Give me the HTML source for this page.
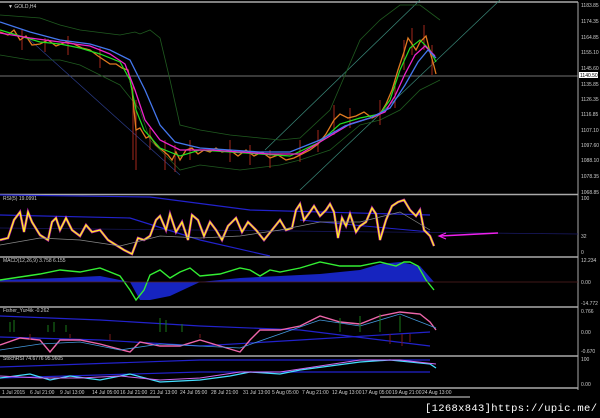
<!DOCTYPE html><html><head><style>
body{margin:0;background:#000;width:600px;height:418px;overflow:hidden;font-family:"Liberation Sans",sans-serif}
svg{position:absolute;left:0;top:0}
.t{font-size:5px;fill:#ccc}
</style></head><body>
<svg width="600" height="418" viewBox="0 0 600 418">
<rect width="600" height="418" fill="#000"/>
<g stroke="#aaa" stroke-width="1.5">
<line x1="0" y1="2" x2="578" y2="2"/>
<line x1="0" y1="194.5" x2="578" y2="194.5"/>
<line x1="0" y1="257" x2="578" y2="257"/>
<line x1="0" y1="307" x2="578" y2="307"/>
<line x1="0" y1="356" x2="578" y2="356"/>
<line x1="0" y1="388" x2="578" y2="388"/>
</g>
<line x1="578" y1="2" x2="578" y2="390" stroke="#aaa"/>
<line x1="0" y1="397" x2="160" y2="397" stroke="#ddd"/>
<line x1="380" y1="397" x2="470" y2="397" stroke="#ddd"/>
<line x1="0" y1="76" x2="578" y2="76" stroke="#999" stroke-width=".7"/>
<g stroke="#3a8a7a" stroke-width=".7" fill="none">
<line x1="265" y1="150" x2="420" y2="0"/>
<line x1="300" y1="190" x2="500" y2="0"/>
<line x1="30" y1="40" x2="180" y2="175" stroke="#2b3c8a"/>
</g>
<g fill="none" stroke="#1f5a1f" stroke-width=".8">
<path d="M0,15 L40,18 60,25 80,30 120,35 135,32 140,34 150,30 160,38 170,80 180,125 200,130 230,135 260,138 280,140 300,138 330,110 360,40 380,20 400,5 420,5 440,20"/>
<path d="M0,55 L30,60 60,60 80,65 120,85 140,110 150,140 170,160 180,170 200,165 240,170 280,165 300,160 330,150 360,125 380,120 400,110 420,90 440,80"/>
</g>
<g stroke="#cc3322" stroke-width=".8">
<path d="M22,30V50 M45,38V52 M68,36V55 M100,48V68 M133,85V160 M136,100V170 M150,128V150 M165,140V170 M175,145V172 M190,140V160 M230,140V162 M250,145V165 M270,150V168 M300,140V162 M318,130V152 M334,105V135 M350,108V128 M380,100V125 M395,80V108 M404,40V70 M412,28V55 M424,25V50 M432,45V75"/>
</g>
<path d="M0,32 L8,35 14,30 20,40 26,36 32,45 40,44 48,40 56,46 66,42 74,44 82,48 90,50 98,56 104,60 110,64 116,64 122,68 128,70 132,90 134,110 136,130 140,128 146,138 150,136 156,145 162,150 168,155 172,160 176,152 180,160 186,150 192,148 198,154 204,150 210,152 216,148 222,152 230,150 238,156 246,150 254,156 262,152 270,158 278,155 286,160 294,158 302,154 310,150 318,144 326,134 334,120 340,114 348,118 356,116 364,112 372,118 380,114 386,104 392,90 398,70 404,52 408,38 412,44 416,50 420,42 426,36 430,52 434,66 436,74" fill="none" stroke="#e07a20" stroke-width="1.3"/>
<path d="M0,30 L20,36 40,42 60,44 80,48 100,54 120,62 130,80 136,110 144,130 160,148 180,156 200,150 230,152 260,154 290,156 320,142 340,124 360,118 380,114 390,100 400,70 410,48 420,40 430,50 436,62" fill="none" stroke="#22dd22" stroke-width="1.2"/>
<path d="M0,33 L30,38 60,42 90,46 110,54 125,64 135,90 145,120 160,140 180,150 210,150 240,152 270,154 300,154 330,136 350,124 370,118 385,112 395,96 405,74 415,55 425,46 435,56" fill="none" stroke="#ee22cc" stroke-width="1.3"/>
<path d="M0,22 L30,32 60,40 90,44 110,50 130,60 145,90 160,125 175,142 200,148 230,150 260,152 290,152 320,140 345,126 370,118 390,108 405,85 418,62 428,50 436,58" fill="none" stroke="#4477ee" stroke-width="1.3"/>
<text x="8" y="8" class="t" fill="#ddd">▼ GOLD,H4</text>
<g class="t">
<text x="581" y="7">1183.85</text><text x="581" y="23">1174.35</text><text x="581" y="39">1164.85</text>
<text x="581" y="54">1155.10</text><text x="581" y="70">1145.60</text><text x="581" y="86">1135.85</text>
<text x="581" y="101">1126.35</text><text x="581" y="116">1116.85</text><text x="581" y="132">1107.10</text>
<text x="581" y="147">1097.60</text><text x="581" y="162">1088.10</text><text x="581" y="178">1078.35</text>
<text x="581" y="194">1068.85</text>
</g>
<rect x="579" y="72" width="19" height="6" fill="#fff"/><text x="580" y="77" style="font-size:5px" fill="#000">1140.50</text>
<g fill="none">
<path d="M0,195 L150,197 250,210 430,215" stroke="#2222cc" stroke-width="1.2"/>
<path d="M0,215 L130,218 200,240 270,256" stroke="#2222cc" stroke-width="1.2"/>
<path d="M0,228 L578,234" stroke="#1a1a66" stroke-width=".7"/>
<path d="M300,220 L430,232" stroke="#2222cc" stroke-width="1"/>
<path d="M0,240 L8,238 14,220 20,212 24,232 28,212 32,222 40,235 48,240 52,222 56,218 60,230 66,218 72,230 80,236 86,225 92,232 100,230 108,240 116,245 124,250 132,254 138,238 144,240 150,236 156,220 160,216 166,230 170,214 176,232 182,222 188,240 192,215 198,220 204,236 210,222 216,230 222,240 228,226 236,218 242,232 248,222 256,230 264,240 272,230 280,220 286,230 292,228 296,210 300,204 304,220 310,212 314,206 320,216 326,210 330,204 334,212 338,238 342,218 346,226 350,214 356,232 360,226 366,222 372,208 376,214 380,240 386,220 392,206 398,202 404,200 410,210 416,216 420,210 424,230 430,236 434,246" stroke="#ee22ee" stroke-width="2.6" opacity=".7"/>
<path d="M0,240 L8,238 14,220 20,212 24,232 28,212 32,222 40,235 48,240 52,222 56,218 60,230 66,218 72,230 80,236 86,225 92,232 100,230 108,240 116,245 124,250 132,254 138,238 144,240 150,236 156,220 160,216 166,230 170,214 176,232 182,222 188,240 192,215 198,220 204,236 210,222 216,230 222,240 228,226 236,218 242,232 248,222 256,230 264,240 272,230 280,220 286,230 292,228 296,210 300,204 304,220 310,212 314,206 320,216 326,210 330,204 334,212 338,238 342,218 346,226 350,214 356,232 360,226 366,222 372,208 376,214 380,240 386,220 392,206 398,202 404,200 410,210 416,216 420,210 424,230 430,236 434,246" stroke="#ffee22" stroke-width="1.4"/>
<path d="M0,245 L40,238 80,240 120,246 160,236 200,238 240,236 280,230 320,222 360,222 400,212 430,230" stroke="#888" stroke-width=".7"/>
<path d="M498,233 L440,236" stroke="#ee22ee" stroke-width="1.5"/>
<path d="M446,233 L439,236 446,239" stroke="#ee22ee" stroke-width="1.2"/>
</g>
<text x="3" y="200" class="t">RSI(5) 19.0991</text>
<g class="t"><text x="581" y="200">100</text><text x="581" y="238">32</text><text x="581" y="254">0</text></g>
<path d="M0,280 L60,278 100,276 130,282 140,300 150,300 170,296 200,282 240,278 280,276 320,274 360,270 380,264 400,262 420,266 434,282 L0,282 Z" fill="#1a2ae0" opacity=".85"/>
<path d="M0,280 L40,274 60,270 80,272 100,268 120,276 130,290 136,300 144,290 150,275 160,270 170,278 180,272 190,268 200,276 220,274 240,268 250,270 260,276 270,270 280,272 300,268 320,262 340,266 360,266 380,262 396,266 404,262 410,262 418,266 426,280 434,290" fill="none" stroke="#33ee33" stroke-width="1.4"/>
<line x1="0" y1="282" x2="578" y2="282" stroke="#552222" stroke-width=".7"/>
<text x="3" y="262" class="t">MACD(12,26,9) 3.758 6.155</text>
<g class="t"><text x="581" y="262">12.234</text><text x="581" y="284">0.00</text><text x="581" y="305">-14.772</text></g>
<g fill="none">
<path d="M0,316 L100,320 200,326 300,330 430,346" stroke="#2222cc" stroke-width="1.2"/>
<path d="M0,337 L100,340 200,346 300,340 430,332" stroke="#2222cc" stroke-width="1.2"/>
<path d="M0,345 L20,338 40,340 50,352 60,340 80,340 100,344 130,352 140,342 160,346 180,346 200,340 220,346 240,352 250,340 260,330 280,330 300,326 320,316 340,322 360,324 380,316 400,312 420,314 430,322 436,330" stroke="#ee66aa" stroke-width="1.4"/>
<path d="M0,350 L40,344 80,342 120,350 160,344 200,346 240,348 280,334 320,320 360,326 400,314 436,328" stroke="#4499dd" stroke-width=".8"/>
</g>
<g stroke="#1a7a1a" stroke-width="1"><path d="M10,332V322 M14,332V320 M48,332V325 M54,332V322 M66,332V325 M160,332V318 M166,332V320 M182,332V324 M340,332V318 M360,332V316 M380,332V314 M400,332V316"/></g>
<g stroke="#7a1a1a" stroke-width="1"><path d="M30,334V340 M70,334V338 M110,334V340 M200,334V338 M390,334V344 M402,334V346 M410,334V342"/></g>
<text x="3" y="312" class="t">Fisher_Yur4ik -0.262</text>
<g class="t"><text x="581" y="313">0.766</text><text x="581" y="334">0.00</text><text x="581" y="353">-0.670</text></g>
<g fill="none">
<path d="M0,367 L200,360 430,360" stroke="#2222cc" stroke-width="1.2"/>
<path d="M0,378 L200,372 430,372" stroke="#2222cc" stroke-width="1.2"/>
<path d="M0,378 L30,374 50,380 70,376 100,380 130,374 160,382 200,380 230,376 250,372 280,374 300,370 330,366 360,362 390,360 410,362 430,364 436,368" stroke="#44ddff" stroke-width="1.3"/>
<path d="M0,376 L40,378 80,378 120,376 160,380 200,378 240,372 280,372 320,366 360,360 400,360 436,364" stroke="#cc66ee" stroke-width="1"/>
</g>
<text x="3" y="360" class="t">StochRSI 74.6776 95.9605</text>
<g class="t"><text x="581" y="361">100</text><text x="581" y="386">0.00</text></g>
<g class="t">
<text x="2" y="394">1 Jul 2015</text><text x="30" y="394">6 Jul 21:00</text><text x="60" y="394">9 Jul 13:00</text>
<text x="92" y="394">14 Jul 05:00</text><text x="120" y="394">16 Jul 21:00</text><text x="150" y="394">21 Jul 13:00</text>
<text x="180" y="394">24 Jul 05:00</text><text x="211" y="394">28 Jul 21:00</text><text x="243" y="394">31 Jul 13:00</text>
<text x="272" y="394">5 Aug 05:00</text><text x="302" y="394">7 Aug 21:00</text><text x="332" y="394">12 Aug 13:00</text>
<text x="362" y="394">17 Aug 05:00</text><text x="392" y="394">19 Aug 21:00</text><text x="422" y="394">24 Aug 13:00</text>
</g>
<text x="425" y="411" style="font-size:10.5px;font-family:'Liberation Mono',monospace" fill="#fff" textLength="172">[1268x843]https://upic.me/</text>
</svg>
</body></html>
